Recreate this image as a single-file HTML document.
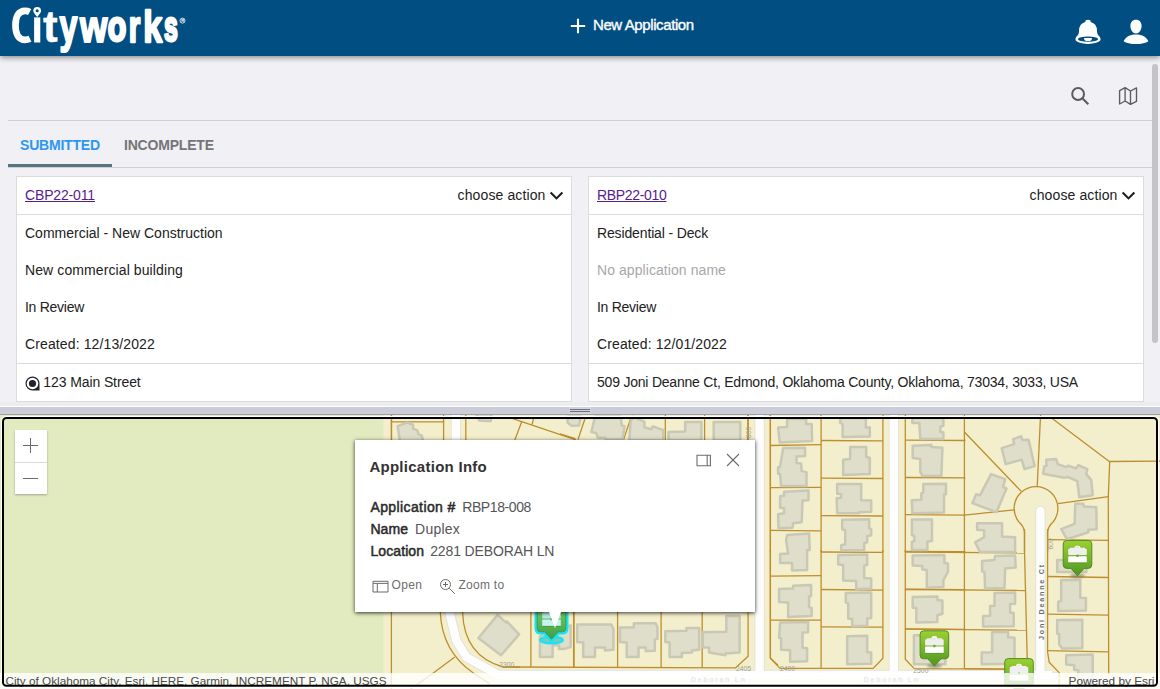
<!DOCTYPE html>
<html><head><meta charset="utf-8"><title>Cityworks</title>
<style>
html,body{margin:0;padding:0;overflow:hidden}
body{width:1160px;height:689px;overflow:hidden;position:relative;background:#f0f0f5;font-family:"Liberation Sans",sans-serif;font-size:14px;color:#212121}
#hdr{position:absolute;left:0;top:0;width:1160px;height:56px;background:#004e82;box-shadow:0 1px 8px 0 rgba(0,0,0,.2),0 3px 4px 0 rgba(0,0,0,.14),0 3px 3px -2px rgba(0,0,0,.12);z-index:5}
#newapp{position:absolute;left:593px;top:16px;font-size:15px;line-height:18px;color:#fff;letter-spacing:-0.4px;white-space:nowrap;-webkit-text-stroke:0.35px #fff}
.hl{position:absolute;left:8px;width:1144px;height:1px;background:#cfcfd3}
.tab{position:absolute;top:137px;font-weight:bold;font-size:14px;line-height:16px;letter-spacing:-0.2px;white-space:nowrap}
.card{position:absolute;top:176px;width:554px;height:224px;border:1px solid #dcdcdc;background:#fff}
.chead{height:37px;line-height:37px;border-bottom:1px solid #dcdcdc;padding:0 8px;position:relative;white-space:nowrap}
.chead a{color:#561c8c;text-decoration:underline;letter-spacing:-0.15px}
.act{position:absolute;right:7px;top:0;letter-spacing:0.12px}
.act svg{margin-left:3.5px;vertical-align:-0.5px}
.cbody{height:148px;border-bottom:1px solid #dcdcdc}
.row{height:37px;line-height:37px;padding:0 8px;white-space:nowrap}
.muted{color:#a8a8a8}
.cfoot{height:37px;line-height:37px;padding:0 8px;position:relative;white-space:nowrap}
#split{position:absolute;left:0;top:402px;width:1160px;height:13px;background:linear-gradient(#ececf1 0,#ececf1 3.5px,#fff 4.2px,#fff 5px,#c9cbd6 5px,#cbcdd8 11.5px,#9c9eae 12.3px,#9c9eae 13px)}
#zoomw{position:absolute;left:15px;top:430px;width:32px;height:64px;background:#fff;box-shadow:0 1px 2px rgba(0,0,0,.3)}
#pop{position:absolute;left:355px;top:440px;width:400px;height:172px;background:#fff;box-shadow:0 1px 4px rgba(0,0,0,.8);color:#323232}
#pop .t{position:absolute;left:14.4px;white-space:nowrap}
#pop .m{color:#2b2b2b;line-height:16px;-webkit-text-stroke:.5px #2b2b2b}
#pop .v{color:#555;line-height:16px}
</style></head><body>

<div id="hdr">
<svg width="200" height="56" viewBox="0 0 200 56" style="position:absolute;left:0;top:0">
<g fill="#fff" stroke="#fff" font-family="Liberation Sans, sans-serif" font-weight="bold" style="vector-effect:non-scaling-stroke" stroke-linejoin="round">
<text vector-effect="non-scaling-stroke" transform="matrix(0.4414,0,0,0.4508,43.00,42.39)" font-size="100" stroke-width="0.4">t</text>
<text vector-effect="non-scaling-stroke" transform="matrix(0.3237,0,0,0.4565,59.50,42.40)" font-size="100" stroke-width="1.8">y</text>
<text vector-effect="non-scaling-stroke" transform="matrix(0.3525,0,0,0.4413,79.91,41.60)" font-size="100" stroke-width="1.8">w</text>
<text vector-effect="non-scaling-stroke" transform="matrix(0.3028,0,0,0.4307,107.85,41.32)" font-size="100" stroke-width="2.5">o</text>
<text vector-effect="non-scaling-stroke" transform="matrix(0.2956,0,0,0.4378,128.70,41.50)" font-size="100" stroke-width="2.0">r</text>
<text vector-effect="non-scaling-stroke" transform="matrix(0.3405,0,0,0.4483,143.20,41.50)" font-size="100" stroke-width="2.0">k</text>
<text vector-effect="non-scaling-stroke" transform="matrix(0.2482,0,0,0.4317,164.00,41.37)" font-size="100" stroke-width="2.4">s</text>
</g>
<rect x="34.1" y="17.4" width="6.2" height="25.1" fill="#fff"/>
<path d="M29.7,12.0 C28.2,11.2 26.6,10.9 25.0,10.9 C18.6,10.9 15.5,16.6 15.5,25.3 C15.5,34.2 18.6,39.8 25.0,39.8 C26.8,39.8 28.5,39.4 30.0,38.7" fill="none" stroke="#fff" stroke-width="6.7"/>
<path d="M37.2,6.9 a3.9,3.9 0 0 1 3.9,3.9 q0,2 -3.9,6.1 q-3.9,-4.1 -3.9,-6.1 a3.9,3.9 0 0 1 3.9,-3.9z" fill="#fff"/>
<circle cx="37.2" cy="10.7" r="1.55" fill="#004e82"/>
<circle cx="182.5" cy="20.6" r="2.5" fill="none" stroke="#fff" stroke-width="0.8"/>
<text x="181.2" y="22.2" font-size="4.2" font-weight="bold" fill="#fff" font-family="Liberation Sans, sans-serif">R</text>
</svg>
<svg width="16" height="16" viewBox="0 0 16 16" style="position:absolute;left:569.5px;top:17.8px"><path d="M8,0.8 V15.2 M0.8,8 H15.2" stroke="#fff" stroke-width="2.1" fill="none"/></svg>
<div id="newapp">New Application</div>
<!-- bell -->
<svg width="30" height="30" viewBox="0 0 30 30" style="position:absolute;left:1073px;top:17px">
<path d="M15,2.7 a2.7,2.2 0 0 1 2.7,2.4 q6.3,1.6 6.3,9 q0,2.6 1,4 q2.6,2 2.6,4.1 a12.6,4.7 0 0 1 -25.2,0 q0,-2.1 2.6,-4.1 q1,-1.4 1,-4 q0,-7.4 6.3,-9 a2.7,2.2 0 0 1 2.7,-2.4z" fill="#fff"/>
<ellipse cx="15" cy="22.2" rx="10.1" ry="2.6" fill="#004e82"/>
<path d="M11,20.9 h8 a4,3.2 0 0 1 -8,0z" fill="#fff"/>
</svg>
<!-- user -->
<svg width="30" height="30" viewBox="0 0 30 30" style="position:absolute;left:1121px;top:17px">
<path d="M15,2.8 c3.6,0 5.6,2.6 5.6,6.2 c0,4 -2.6,7.5 -5.6,7.5 c-3,0 -5.6,-3.5 -5.6,-7.5 c0,-3.6 2,-6.2 5.6,-6.2z" fill="#fff"/>
<path d="M2.6,24.2 c2,-4.4 6,-6.8 12.4,-6.8 c6.400,0 10.400,2.400 12.400,6.800 c-2.5,1.800 -7.200,2.900 -12.400,2.900 c-5.200,0 -9.900,-1.100 -12.400,-2.900z" fill="#fff"/>
</svg>
</div>

<!-- toolbar icons -->
<svg width="24" height="24" viewBox="0 0 24 24" style="position:absolute;left:1066px;top:82px"><circle cx="12.1" cy="12" r="5.9" fill="none" stroke="#5c5c5e" stroke-width="2"/><path d="M16.6,16.6 L22.3,22.2" stroke="#5c5c5e" stroke-width="2.1"/></svg>
<svg width="24" height="24" viewBox="0 0 24 24" style="position:absolute;left:1116px;top:84px"><path d="M3.6,6.6 L9.1,3.6 L14.5,7 L20.5,3.9 V17.4 L14.5,20.4 L9.1,17 L3.6,20 Z M9.1,3.6 V17 M14.5,7 V20.4" fill="none" stroke="#5c5c5e" stroke-width="1.35" stroke-linejoin="round"/></svg>
<div class="hl" style="top:120px"></div>
<div class="tab" style="left:20px;color:#2b97f3">SUBMITTED</div>
<div class="tab" style="left:124px;color:#757575">INCOMPLETE</div>
<div class="hl" style="top:167px"></div>
<div style="position:absolute;left:8px;top:164px;width:104px;height:3px;background:#567480"></div>
<!-- scrollbar -->
<div style="position:absolute;left:1152px;top:64px;width:6px;height:279px;border-radius:3px;background:#c4c4c7"></div>

<div class="card" style="left:16px">
<div class="chead"><a>CBP22-011</a><span class="act">choose action<svg width="15" height="10" viewBox="0 0 15 10"><path d="M1.6,1.6 L7.5,7.4 L13.4,1.6" fill="none" stroke="#1c1c1c" stroke-width="2.1"/></svg></span></div>
<div class="cbody"><div class="row ">Commercial - New Construction</div><div class="row "><span style="letter-spacing:.1px">New commercial building</span></div><div class="row "><span style="letter-spacing:-.27px">In Review</span></div><div class="row "><span style="letter-spacing:.12px">Created: 12/13/2022</span></div></div>
<div class="cfoot" style="padding-left:26.3px"><svg width="15" height="15" viewBox="0 0 15 15" style="position:absolute;left:7.7px;top:11.7px"><path d="M7.5,0.5 a7,7 0 0 1 7,7 v7 h-7 a7,7 0 0 1 0,-14z" fill="#20232b"/><circle cx="7.5" cy="7.5" r="5.8" fill="#fff"/><circle cx="7.5" cy="7.5" r="3.6" fill="#20232b"/></svg><span style="letter-spacing:-.1px">123 Main Street</span></div>
</div>
<div class="card" style="left:588px">
<div class="chead"><a><span style="letter-spacing:-.33px">RBP22-010</span></a><span class="act">choose action<svg width="15" height="10" viewBox="0 0 15 10"><path d="M1.6,1.6 L7.5,7.4 L13.4,1.6" fill="none" stroke="#1c1c1c" stroke-width="2.1"/></svg></span></div>
<div class="cbody"><div class="row "><span style="letter-spacing:-.14px">Residential - Deck</span></div><div class="row muted"><span style="letter-spacing:.07px">No application name</span></div><div class="row "><span style="letter-spacing:-.27px">In Review</span></div><div class="row "><span style="letter-spacing:.12px">Created: 12/01/2022</span></div></div>
<div class="cfoot" style=""><span style="letter-spacing:-.215px">509 Joni Deanne Ct, Edmond, Oklahoma County, Oklahoma, 73034, 3033, USA</span></div>
</div>

<div id="split">
<div style="position:absolute;left:569px;top:5px;width:22px;height:7px;background:#d0d2de"></div>
<div style="position:absolute;left:570px;top:7px;width:20px;height:1px;background:#6d6d7d"></div>
<div style="position:absolute;left:570px;top:9px;width:20px;height:1px;background:#6d6d7d"></div>
</div>


<svg id="map" width="1160" height="274" viewBox="0 415 1160 274" style="position:absolute;left:0;top:415px;display:block">
<defs>
<linearGradient id="mg" x1="0" y1="0" x2="0" y2="1"><stop offset="0" stop-color="#9ccf33"/><stop offset=".55" stop-color="#73b22c"/><stop offset="1" stop-color="#4f9424"/></linearGradient>
<linearGradient id="mgs" x1="0" y1="0" x2="0" y2="1"><stop offset="0" stop-color="#7fd060"/><stop offset=".6" stop-color="#58b455"/><stop offset="1" stop-color="#3c9c4c"/></linearGradient>
<filter id="blur1" x="-50%" y="-100%" width="200%" height="300%"><feGaussianBlur stdDeviation="1.3"/></filter>
</defs>
<rect x="0" y="415" width="1160" height="274" fill="#f3efcd"/>
<rect x="0" y="415" width="383.4" height="274" fill="#e2ebbf"/>
<!-- roads -->
<g fill="none" stroke="#e2e1d6" stroke-width="10.2" stroke-linecap="butt" stroke-linejoin="round">
<path d="M455.9,400 V520 Q450.2,570 449.6,612.9 L456.2,640.4 L466.6,657.4 L498.3,674.9 H1052"/>
<path d="M759.6,400 V674"/><path d="M893.8,400 V674"/><path d="M1040.4,511 V674" stroke-linecap="round"/>
</g>
<path d="M498,670.5 L600,671.6 L760,672.4 H1058.6 L1060.2,674 V680.2 H498 Z" fill="#e2e1d6"/>
<g fill="none" stroke="#fdfdfd" stroke-width="8.4" stroke-linecap="butt" stroke-linejoin="round">
<path d="M455.9,400 V520 Q450.2,570 449.6,612.9 L456.2,640.4 L466.6,657.4 L498.3,674.9 H1052"/>
<path d="M759.6,400 V676"/><path d="M893.8,400 V676"/><path d="M1040.4,511 V676" stroke-linecap="round"/>
</g>
<path d="M498,671.3 L600,672.3 L760,673.1 H1057.8 L1059.3,674.5 V679.4 H498 Z" fill="#fdfdfd"/>
<!-- parcels -->
<g fill="none" stroke="#bd8e2f" stroke-width="1.3" stroke-linejoin="round">
<polyline points="770.4,414.0 770.4,552.1"/>
<polyline points="821.1,414.0 821.1,552.1"/>
<polyline points="882.9,414.0 882.9,552.1"/>
<polyline points="905.3,414.0 905.3,552.1"/>
<polyline points="770.4,445.5 821.1,444.7"/>
<polyline points="770.4,487.7 821.1,487.3"/>
<polyline points="770.4,530.4 821.1,530.8"/>
<polyline points="821.1,440.5 882.9,440.9"/>
<polyline points="821.1,478.1 882.9,478.5"/>
<polyline points="821.1,515.6 882.9,516.0"/>
<polyline points="905.3,440.1 965.4,440.5"/>
<polyline points="905.3,477.5 965.4,477.9"/>
<polyline points="905.3,514.6 965.4,515.2"/>
<polyline points="905.3,551.3 965.4,551.7"/>
<polyline points="770.4,550.0 770.4,658.2 780.1,668.4 873.2,668.4 882.9,658.2 882.9,550.0"/>
<polyline points="821.1,550.0 821.1,668.4"/>
<polyline points="905.3,550.0 905.3,659.2 914.3,668.6 1025.6,669.2"/>
<polyline points="770.4,576.1 821.1,575.7"/>
<polyline points="770.4,620.1 821.1,620.1"/>
<polyline points="821.1,552.0 882.9,552.4"/>
<polyline points="821.1,589.5 882.9,590.1"/>
<polyline points="821.1,626.8 882.9,627.2"/>
<polyline points="905.3,589.1 965.4,589.7"/>
<polyline points="905.3,628.8 965.4,629.4"/>
<polyline points="964.4,414.0 964.4,668.5"/>
<polyline points="964.4,432.0 1021.1,491.2"/>
<polyline points="1040.6,414.0 1037.2,486.5"/>
<polyline points="1050.2,417.0 1109.3,461.5 1160.0,461.1"/>
<polyline points="1109.7,461.5 1108.3,496.6 1108.7,674.5"/>
<polyline points="1057.8,503.6 1108.3,496.6"/>
<polyline points="964.4,515.2 1014.1,509.8"/>
<polyline points="1024.5,529.0 1024.5,550.0 1027.2,658.2 1027.2,668.6"/>
<polyline points="904.9,552.0 1024.5,553.0"/>
<polyline points="904.9,589.5 1025.8,590.5"/>
<polyline points="904.9,629.2 1026.6,630.2"/>
<polyline points="964.4,668.6 1005.1,669.2"/>
<polyline points="1047.6,529.0 1047.6,652.2 1049.2,662.2 1059.2,672.6 1059.2,690.3"/>
<polyline points="1047.6,539.6 1108.7,540.4"/>
<polyline points="1047.6,576.5 1108.7,577.5"/>
<polyline points="1047.6,614.1 1108.7,615.1"/>
<polyline points="1047.6,650.6 1108.7,651.8"/>
<polyline points="391.4,400.7 391.4,690.6"/>
<polyline points="454.8,657.1 434.0,672.5 417.7,684.2 403.2,694.2"/>
<polyline points="530.9,600.0 530.9,667.0"/>
<polyline points="574.0,600.0 574.0,667.4"/>
<polyline points="573.6,600.0 573.6,667.4"/>
<polyline points="617.6,600.0 617.6,667.4"/>
<polyline points="661.1,600.0 661.1,667.4"/>
<polyline points="702.2,600.0 702.2,667.4"/>
<polyline points="748.1,400.7 748.1,656.2 735.4,667.9 502.6,667.0"/>
<polyline points="770.3,400.7 770.3,658.0 778.0,665.2"/>
<polyline points="391.5,414.0 391.5,441.6"/>
<polyline points="443.6,414.0 443.6,441.6"/>
<polyline points="391.5,421.8 443.6,421.8"/>
<polyline points="465.8,414.0 465.8,441.6"/>
<polyline points="510.5,417.8 576.0,439.9"/>
<polyline points="521.7,421.8 514.8,439.9"/>
<polyline points="533.8,417.8 532.0,424.7"/>
<polyline points="575.2,438.7 560.0,433.9"/>
<polyline points="585.6,416.8 578.0,439.6"/>
<polyline points="631.2,416.8 623.6,439.6"/>
<polyline points="665.3,414.0 665.3,440.6"/>
<polyline points="704.6,414.0 704.6,440.6"/>
<polyline points="747.9,414.0 747.9,440.6"/>
<path d="M440.3,600 V612.3 Q442,652 474,673.5 L490,684"/>
<path d="M462.6,600 V612.3 Q464,656 503,667 H520"/>
<path d="M1024.5,552 V532 Q1024,526.5 1018.5,521.5 A21.85,21.85 0 1 1 1053.5,521.5 Q1048,526.5 1047.6,532 V552"/>
</g>
<!-- buildings -->
<g fill="#dfdecb" stroke="#c9c8b5" stroke-width="2.5" stroke-linejoin="round">
<polygon points="787.1,419.0 806.1,419.0 806.1,424.0 811.7,424.0 812.1,441.1 779.7,442.5 778.1,427.6 787.1,427.0"/>
<polygon points="783.1,448.1 805.1,447.7 805.1,456.1 796.5,456.5 796.5,463.1 801.1,463.5 801.7,471.1 806.5,472.1 806.5,486.1 781.1,486.1 780.1,474.1 778.1,473.7 778.1,467.1 780.1,466.5"/>
<polygon points="784.1,491.8 808.5,490.6 808.5,500.2 802.5,500.6 801.7,522.2 793.1,523.2 792.5,527.8 778.5,528.2 778.1,514.2 784.1,513.2 784.1,508.2 780.1,507.8 780.1,496.2 784.1,495.8"/>
<polygon points="840.2,418.0 865.8,418.0 865.8,427.6 869.8,427.6 869.8,436.4 842.6,437.0 842.6,423.6 840.2,423.0"/>
<polygon points="850.2,447.1 866.2,447.1 866.2,457.1 869.8,457.7 869.8,474.1 843.2,475.1 843.2,459.7 850.2,459.1"/>
<polygon points="837.2,484.1 861.2,484.1 861.2,500.2 871.2,500.6 871.2,511.8 859.2,512.2 859.2,513.2 837.2,513.2 836.6,498.2 841.2,497.8 841.2,494.2 837.2,493.8"/>
<polygon points="842.2,519.8 869.2,519.2 869.2,528.2 871.2,529.2 871.2,535.2 867.2,536.2 867.2,542.3 864.2,543.3 864.2,549.9 841.2,550.3 841.2,545.3 845.2,544.3 845.2,530.2 842.2,529.2"/>
<polygon points="912.3,418.0 943.4,418.0 943.4,426.0 940.4,426.4 940.4,432.0 943.4,432.4 943.4,439.1 920.3,439.1 919.3,423.0 912.3,423.0"/>
<polygon points="912.7,445.7 931.4,445.1 931.4,447.1 942.4,447.7 941.4,476.1 922.7,476.1 920.3,472.1 920.3,459.1 912.7,458.1"/>
<polygon points="923.3,484.1 946.0,483.7 946.0,494.2 944.0,494.6 944.0,512.6 912.3,513.2 911.9,500.2 921.3,499.8 921.3,493.2 923.3,492.8"/>
<polygon points="787.1,535.0 809.1,533.6 809.7,550.0 807.1,550.0 807.1,570.0 792.1,570.4 792.1,563.0 780.1,563.0 780.1,554.0 788.1,553.6 786.1,540.0"/>
<polygon points="793.1,585.7 811.1,585.1 811.1,596.1 809.1,596.5 809.1,607.1 811.7,608.1 811.7,616.1 788.1,617.1 788.1,602.5 779.1,602.1 779.1,589.1 793.1,588.5"/>
<polygon points="780.1,622.5 808.1,622.1 808.1,632.2 802.5,632.6 802.5,647.8 807.1,648.2 807.1,661.2 790.1,661.8 790.1,650.2 781.1,649.8 781.1,638.2 779.1,637.8"/>
<polygon points="838.2,555.0 867.2,554.4 867.2,565.0 864.2,565.6 864.2,578.1 871.2,578.5 871.2,588.5 856.2,589.1 856.2,581.1 843.2,580.5 843.2,565.0 838.2,564.4"/>
<polygon points="845.8,593.1 871.2,592.5 871.2,618.1 867.2,618.5 867.2,625.8 852.2,626.2 852.2,619.1 848.2,618.5 848.2,603.1 845.8,602.5"/>
<polygon points="847.2,636.2 867.2,635.8 867.2,652.2 871.2,652.6 871.2,663.8 847.2,664.2"/>
<polygon points="911.9,519.5 932.0,519.5 932.0,541.0 927.4,541.6 927.4,550.0 911.9,550.0 911.9,542.0 914.3,541.0 914.3,536.0 911.9,535.0"/>
<polygon points="912.7,555.6 944.4,555.0 944.4,563.0 948.0,563.6 948.0,572.0 943.4,580.1 943.4,587.1 926.8,587.7 926.8,570.0 922.3,569.6 922.3,566.0 912.7,565.6"/>
<polygon points="912.7,597.1 937.4,596.5 937.4,600.1 942.4,600.5 942.4,614.1 937.4,615.1 937.4,622.1 916.3,622.5 916.3,608.1 912.7,607.7"/>
<polygon points="913.9,635.2 945.4,635.2 945.4,664.2 913.9,664.2"/>
<polygon points="1001.7,448.1 1014.1,444.1 1013.1,439.1 1021.1,436.4 1022.5,440.1 1028.6,439.7 1034.6,466.1 1024.5,469.1 1021.7,459.7 1005.7,464.1"/>
<polygon points="1046.2,459.7 1056.2,459.1 1057.8,464.1 1066.2,467.1 1068.2,465.7 1075.9,468.5 1078.3,465.1 1087.3,469.1 1086.3,474.1 1091.3,480.1 1092.7,495.2 1079.3,497.2 1077.3,481.1 1068.2,477.1 1064.2,477.7 1043.2,473.7 1044.2,466.5 1046.6,465.7"/>
<polygon points="991.1,474.1 1005.1,479.1 1003.1,487.1 1006.5,488.5 996.5,512.2 972.4,503.2 976.1,494.2 980.1,495.2"/>
<polygon points="1075.3,503.8 1083.3,503.8 1083.9,506.6 1096.3,507.2 1096.7,529.2 1088.3,529.8 1088.3,532.2 1067.2,539.3 1061.2,529.2 1074.6,523.8"/>
<polygon points="977.1,523.2 1002.1,523.2 1002.1,536.6 1015.1,537.2 1015.1,552.1 980.1,552.1 975.1,542.3 984.1,537.2 984.1,530.2 977.1,529.8"/>
<polygon points="995.1,556.0 1015.1,555.6 1015.7,567.6 1005.1,568.4 1004.5,588.1 985.1,588.5 984.5,572.0 982.1,571.6 982.1,561.0 994.5,560.0"/>
<polygon points="994.5,593.1 1015.1,592.5 1015.1,603.7 1010.1,604.1 1010.1,612.5 1013.7,613.1 1013.7,626.2 983.1,626.6 983.1,616.1 990.1,615.7 990.1,606.1 994.5,605.7"/>
<polygon points="992.1,632.2 1008.1,631.8 1008.1,637.2 1014.5,637.8 1014.5,663.8 981.7,664.2 981.7,652.6 992.1,652.2"/>
<polygon points="1057.2,560.0 1086.3,560.0 1086.3,572.0 1057.2,572.0"/>
<polygon points="1061.2,580.1 1080.3,579.7 1080.3,597.7 1085.9,598.1 1085.9,610.5 1058.2,611.1 1058.2,601.7 1061.2,601.1"/>
<polygon points="1057.2,620.1 1082.3,619.7 1082.3,648.2 1062.2,648.6 1059.2,644.2 1059.2,634.2 1057.2,633.8"/>
<polygon points="1066.2,655.2 1092.7,654.6 1092.7,690.3 1078.3,690.3 1078.3,670.2 1074.2,669.8 1074.2,665.2 1066.2,664.6"/>
<polygon points="497.7,614.9 506.1,622.6 506.8,621.4 519.1,634.4 501.0,655.3 478.4,638.0"/>
<polygon points="539.9,636.2 570.7,625.4 570.7,647.1 564.4,648.9 559.0,648.9 559.0,645.3 552.6,645.3 552.6,657.1 539.9,657.1"/>
<polygon points="577.2,624.5 611.3,624.5 613.5,629.0 613.5,649.8 604.9,650.4 604.9,647.5 595.0,647.5 595.0,657.1 583.2,657.1 583.2,642.6 577.2,642.0"/>
<polygon points="633.9,623.2 655.7,623.2 657.5,627.2 657.5,638.9 654.8,639.5 654.8,650.7 645.7,651.1 645.7,647.5 638.5,647.5 638.5,657.1 626.7,657.1 626.7,642.6 620.0,642.0 620.0,627.5 633.9,627.2"/>
<polygon points="665.3,631.2 686.5,630.8 686.5,628.1 699.2,628.1 699.2,649.8 691.9,650.4 691.9,652.5 681.9,652.9 681.9,657.1 669.6,657.1 669.6,642.6 665.3,642.0"/>
<polygon points="726.3,615.9 739.6,615.9 739.6,652.5 725.4,653.4 725.4,655.3 709.1,652.5 709.1,647.5 702.8,647.5 702.8,632.2 726.3,631.7"/>
<polygon points="397.6,426.1 407.0,422.6 413.1,424.7 413.1,428.7 417.4,430.4 418.2,433.8 421.7,435.6 423.4,442.4 400.1,442.4"/>
<polygon points="476.0,414.0 491.5,414.0 490.7,421.2 479.4,420.6"/>
<polygon points="567.6,416.8 580.9,416.8 579.0,425.4 571.4,425.8 567.6,422.5"/>
<polygon points="595.1,416.8 620.7,416.8 621.7,425.4 624.5,426.3 622.6,439.6 605.5,439.6 605.5,437.7 598.0,437.7 596.1,433.0 591.3,432.0"/>
<polygon points="633.1,416.8 644.4,421.6 644.4,427.3 651.1,429.2 653.0,426.3 663.4,430.1 663.4,440.6 629.3,440.6 630.6,421.6"/>
<polygon points="668.5,432.0 685.2,431.5 685.2,422.0 701.4,422.0 701.4,440.6 668.5,440.6"/>
<polygon points="713.7,422.0 740.3,422.0 740.3,440.6 713.7,440.6"/>
</g>
<!-- labels -->
<g font-family="Liberation Sans, sans-serif" font-size="6.8" fill="#a19f91">
<text x="499.2" y="666.7">2300</text><text x="780" y="671.2">2400</text><text x="736" y="670.8">2405</text><text x="913.3" y="672.8">2500</text>
<text transform="translate(751.3,438) rotate(-90)">800</text>
<text transform="translate(1053.3,549.5) rotate(-90)">600</text>
</g>
<g font-family="Liberation Sans, sans-serif" font-weight="bold" fill="#6c6c6c" font-size="7.2">
<text transform="translate(1043.5,640) rotate(-90)" letter-spacing="1.76">Joni Deanne Ct</text>
<text x="690.8" y="681.7" letter-spacing="1.6" fill="#848484">Deborah Ln</text>
<text x="863.8" y="681.7" letter-spacing="1.6" fill="#848484">Deborah Ln</text>
</g>
<!-- markers -->
<ellipse cx="551.5" cy="640.0" rx="11.3" ry="3.4" fill="#84c7b8" stroke="#14e4f4" stroke-width="2.3"/><path d="M540.8,603.8 H562.2 Q565.8,603.8 565.8,607.4 V628.2 Q565.8,631.8 562.2,631.8 H558.1 L551.5,639.2 L544.9,631.8 H540.8 Q537.2,631.8 537.2,628.2 V607.4 Q537.2,603.8 540.8,603.8 Z" fill="none" stroke="#14e4f4" stroke-width="5.4" stroke-linejoin="round"/><path d="M540.8,603.8 H562.2 Q565.8,603.8 565.8,607.4 V628.2 Q565.8,631.8 562.2,631.8 H558.1 L551.5,639.2 L544.9,631.8 H540.8 Q537.2,631.8 537.2,628.2 V607.4 Q537.2,603.8 540.8,603.8 Z" fill="url(#mgs)" stroke="#3f9a4a" stroke-width="1"/><path d="M549.5,612.2 v-1.0 q0,-1.2 1.2,-1.2 h1.6 q1.2,0 1.2,1.2 v1.0" fill="none" stroke="#b6ecec" stroke-width="1.9"/><rect x="543.9" y="611.2" width="15.2" height="1.6" rx=".6" fill="#f1f1f1"/><rect x="542.2" y="612.2" width="18.6" height="6.3" rx="0.8" fill="#b6ecec"/><rect x="542.2" y="619.6" width="18.6" height="6.4" rx="0.6" fill="#c6f2f0"/><rect x="542.2" y="625.8" width="18.6" height="1.1" fill="#4d8a22" opacity=".55"/><circle cx="551.5" cy="619.1" r="1.3" fill="#6aa82a"/>
<ellipse cx="934.4" cy="666.0" rx="7.5" ry="2.2" fill="#6b6650" opacity=".55" filter="url(#blur1)"/><path d="M923.7,630.8 H945.1 Q948.7,630.8 948.7,634.4 V655.2 Q948.7,658.8 945.1,658.8 H941.0 L934.4,666.2 L927.8,658.8 H923.7 Q920.1,658.8 920.1,655.2 V634.4 Q920.1,630.8 923.7,630.8 Z" fill="url(#mg)" stroke="#4f8f1f" stroke-width="1"/><path d="M932.4,639.2 v-1.0 q0,-1.2 1.2,-1.2 h1.6 q1.2,0 1.2,1.2 v1.0" fill="none" stroke="#f4f4f4" stroke-width="1.9"/><rect x="926.8" y="638.2" width="15.2" height="1.6" rx=".6" fill="#f1f1f1"/><rect x="925.1" y="639.2" width="18.6" height="6.3" rx="0.8" fill="#efefef"/><rect x="925.1" y="646.6" width="18.6" height="6.4" rx="0.6" fill="#ffffff"/><rect x="925.1" y="652.8" width="18.6" height="1.1" fill="#4d8a22" opacity=".55"/><circle cx="934.4" cy="646.1" r="1.3" fill="#6aa82a"/>
<ellipse cx="1077.5" cy="575.6" rx="7.5" ry="2.2" fill="#6b6650" opacity=".55" filter="url(#blur1)"/><path d="M1066.8,540.4 H1088.2 Q1091.8,540.4 1091.8,544.0 V564.8 Q1091.8,568.4 1088.2,568.4 H1084.1 L1077.5,575.8 L1070.9,568.4 H1066.8 Q1063.2,568.4 1063.2,564.8 V544.0 Q1063.2,540.4 1066.8,540.4 Z" fill="url(#mg)" stroke="#4f8f1f" stroke-width="1"/><path d="M1075.5,548.8 v-1.0 q0,-1.2 1.2,-1.2 h1.6 q1.2,0 1.2,1.2 v1.0" fill="none" stroke="#f4f4f4" stroke-width="1.9"/><rect x="1069.9" y="547.8" width="15.2" height="1.6" rx=".6" fill="#f1f1f1"/><rect x="1068.2" y="548.8" width="18.6" height="6.3" rx="0.8" fill="#efefef"/><rect x="1068.2" y="556.2" width="18.6" height="6.4" rx="0.6" fill="#ffffff"/><rect x="1068.2" y="562.4" width="18.6" height="1.1" fill="#4d8a22" opacity=".55"/><circle cx="1077.5" cy="555.7" r="1.3" fill="#6aa82a"/>
<ellipse cx="1019.0" cy="693.8" rx="7.5" ry="2.2" fill="#6b6650" opacity=".55" filter="url(#blur1)"/><path d="M1008.3,658.6 H1029.7 Q1033.3,658.6 1033.3,662.2 V683.0 Q1033.3,686.6 1029.7,686.6 H1025.6 L1019.0,694.0 L1012.4,686.6 H1008.3 Q1004.7,686.6 1004.7,683.0 V662.2 Q1004.7,658.6 1008.3,658.6 Z" fill="url(#mg)" stroke="#4f8f1f" stroke-width="1"/><path d="M1017.0,667.0 v-1.0 q0,-1.2 1.2,-1.2 h1.6 q1.2,0 1.2,1.2 v1.0" fill="none" stroke="#f4f4f4" stroke-width="1.9"/><rect x="1011.4" y="666.0" width="15.2" height="1.6" rx=".6" fill="#f1f1f1"/><rect x="1009.7" y="667.0" width="18.6" height="6.3" rx="0.8" fill="#efefef"/><rect x="1009.7" y="674.4" width="18.6" height="6.4" rx="0.6" fill="#ffffff"/><rect x="1009.7" y="680.6" width="18.6" height="1.1" fill="#4d8a22" opacity=".55"/><circle cx="1019.0" cy="673.9" r="1.3" fill="#6aa82a"/>
<!-- attribution -->
<rect x="0" y="673" width="1160" height="16" fill="#ffffff" opacity=".8"/>
<g font-family="Liberation Sans, sans-serif" font-size="11.6" fill="#4a4a4a">
<text x="5.5" y="684.6" textLength="381" lengthAdjust="spacingAndGlyphs">City of Oklahoma City, Esri, HERE, Garmin, INCREMENT P, NGA, USGS</text>
<text x="1068.5" y="684.6" textLength="86" lengthAdjust="spacingAndGlyphs">Powered by Esri</text>
</g>
<!-- focus ring -->
<rect x="1.5" y="416.5" width="1157" height="271" rx="4.5" fill="none" stroke="#fff" stroke-width="1"/>
<rect x="3" y="418" width="1154" height="267.8" rx="3.5" fill="none" stroke="#000" stroke-width="2"/>
</svg>


<div id="zoomw">
<div style="position:absolute;left:0;top:32px;width:32px;height:1px;background:#d9d9d9"></div>
<svg width="32" height="64" viewBox="0 0 32 64" style="position:absolute;left:0;top:0"><path d="M8,15.5 H23 M15.5,8 V23 M8,48.5 H23" stroke="#6a6a6a" stroke-width="1" fill="none"/></svg>
</div>

<div id="pop">
<svg width="14" height="18" viewBox="0 0 14 18" style="position:absolute;left:193px;top:171px"><path d="M0.7,0 H13.3 L7,17.3 Z" fill="#fff"/></svg>
<div class="t" style="top:17.3px;font-size:15px;font-weight:bold;line-height:20px;letter-spacing:0.27px">Application Info</div>
<svg width="16" height="14" viewBox="0 0 16 14" style="position:absolute;left:340.5px;top:13.5px"><path d="M1,1.3 H14.4 V11.7 H1 Z M11.2,1.3 V11.7" fill="none" stroke="#6b6b6b" stroke-width="1.1"/></svg>
<svg width="14" height="14" viewBox="0 0 14 14" style="position:absolute;left:371px;top:13px"><path d="M1,1 L13,13 M13,1 L1,13" fill="none" stroke="#6b6b6b" stroke-width="1.1"/></svg>
<div class="t m" style="left:15.4px;top:58.7px;letter-spacing:.4px">Application #</div><div class="t v" style="left:107.2px;top:58.7px;letter-spacing:-.4px">RBP18-008</div>
<div class="t m" style="left:15.4px;top:80.7px;letter-spacing:.1px">Name</div><div class="t v" style="left:60.1px;top:80.7px;letter-spacing:.22px">Duplex</div>
<div class="t m" style="left:15.4px;top:102.7px;letter-spacing:.1px">Location</div><div class="t v" style="left:75.2px;top:102.7px;letter-spacing:-.13px">2281 DEBORAH LN</div>
<svg width="18" height="14" viewBox="0 0 18 14" style="position:absolute;left:16.5px;top:139.5px"><path d="M1,1.3 H16 V12 H1 Z M1,3.4 H16 M5.3,3.4 V12" fill="none" stroke="#6b6b6b" stroke-width="1"/></svg>
<div class="t" style="left:36.5px;top:137.5px;font-size:12px;line-height:14px;color:#6e6e6e;letter-spacing:.33px">Open</div>
<svg width="18" height="18" viewBox="0 0 18 18" style="position:absolute;left:84px;top:137.5px"><circle cx="6.5" cy="6.5" r="5" fill="none" stroke="#6b6b6b" stroke-width="1"/><path d="M6.5,4 V9 M4,6.5 H9 M10.2,10.2 L15.8,15.8" stroke="#6b6b6b" stroke-width="1" fill="none"/></svg>
<div class="t" style="left:103.5px;top:137.5px;font-size:12px;line-height:14px;color:#6e6e6e;letter-spacing:.26px">Zoom to</div>
</div>

</body></html>
